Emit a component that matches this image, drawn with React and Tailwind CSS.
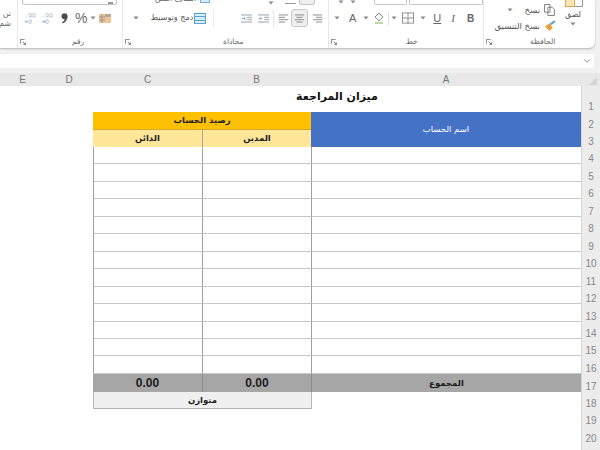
import React from 'react';
import { ChevronDown } from 'lucide-react';

const ARABIC = { fontFamily: '"DejaVu Sans", sans-serif' };

// Small launcher arrow in the corner of each ribbon group
function Launcher({ className = '' }) {
  return (
    <svg width="7" height="7" viewBox="0 0 9 9" className={className} fill="none" stroke="#777" strokeWidth="1.200">
      <path d="M.5 6V.5H6" />
      <path d="M3.5 3.5L7 7M7 4.5V7H4.5" />
    </svg>
  );
}

function Caret({ className = '' }) {
  return (
    <svg width="6" height="4" viewBox="0 0 6 4" className={className} fill="#8a8a8a">
      <path d="M.5 .5h5L3 3.500z" />
    </svg>
  );
}

function AlignIcon({ kind }) {
  const lines = {
    left: ['M1 2h12', 'M1 5h8', 'M1 8h12', 'M1 11h8'],
    center: ['M1 2h12', 'M3 5h8', 'M1 8h12', 'M3 11h8'],
    right: ['M1 2h12', 'M5 5h8', 'M1 8h12', 'M5 11h8'],
  };
  return (
    <svg width="11" height="11" viewBox="0 0 14 13" fill="none" stroke="#808080" strokeWidth="1.100">
      {lines[kind].map((d) => <path key={d} d={d} />)}
    </svg>
  );
}

function IndentIcon({ flip }) {
  return (
    <svg width="11" height="11" viewBox="0 0 14 12" fill="none" stroke="#87949a" strokeWidth="1.100">
      <path d="M0 1.500h14M0 10.500h14M8 4.500h6M8 7.500h6" />
      <path d={flip ? 'M1 6h4M3.500 4L5.500 6l-2 2' : 'M1.500 6h4M3.500 4l-2 2 2 2'} stroke="#6aaed8" />
    </svg>
  );
}

function DecimalIcon({ flip }) {
  return (
    <svg width="11" height="13" viewBox="0 0 14 14" fill="none" strokeWidth="1">
      <path d="M5 1h3v4H5zM10 1h3v4h-3zM5 9h3v4H5z" stroke="#9aa6b0" strokeDasharray="1 .5" />
      <path d={flip ? 'M0 11h4M2.500 9.500L4 11l-1.500 1.500' : 'M0 11h4M1.500 9.500L0 11l1.500 1.500'} stroke="#6aaed8" />
      <path d="M1 4h1" stroke="#6aaed8" />
    </svg>
  );
}

function RibbonGroup({ width, label, labelClass, children, top, border = true }) {
  return (
    <div className={`flex h-full flex-col ${border ? 'border-r border-[#e8e8e8]' : ''} ${width}`}>
      <div className="relative h-[8px] shrink-0 overflow-hidden">{top}</div>
      <div className="h-[28px] shrink-0">{children}</div>
      <div className="flex h-[11px] shrink-0 items-start pl-[1px]">
        <Launcher className="ml-[1px] mt-[3px]" />
        <span className={`text-[7.500px] leading-[11px] text-[#666] ${labelClass}`} style={ARABIC}>{label}</span>
      </div>
    </div>
  );
}

function Ribbon() {
  return (
    <div className="flex h-[48px] w-[595px] overflow-hidden rounded-br-md bg-white shadow-[0_1px_2px_rgba(0,0,0,0.25)]">
      {/* cropped styles group */}
      <div className="flex h-full w-[18px] shrink-0 flex-col items-end border-r border-[#e8e8e8] pr-[6px] pt-[9px] text-[8px] leading-[10px] text-[#666]" style={ARABIC}>
        <span>تن</span>
        <span>شم</span>
      </div>

      {/* number */}
      <RibbonGroup
        width="w-[105px] shrink-0"
        label="رقم"
        labelClass="ml-[45px]"
        top={
          <div className="ml-[4px] flex h-[5px] w-[95px] items-end justify-end rounded-b-[3px] border border-t-0 border-[#c4c4c4] pr-[3px]">
            <span className="h-[2px] w-[5px] bg-[#999]" />
          </div>
        }
      >
        <div className="flex h-[20px] items-center pl-[7px]">
          <DecimalIcon />
          <span className="w-[6px]" />
          <DecimalIcon flip />
          <svg width="7" height="11" viewBox="0 0 7 11" className="ml-[8px]" fill="#4d4d4d">
            <circle cx="3.500" cy="3.200" r="3" />
            <path d="M6.500 3.500c0 3-2 6-5 7l-.5-1c2-1 3-3 3-5z" />
          </svg>
          <span className="ml-[7px] text-[14px] leading-none text-[#6a6a6a]" style={{ fontFamily: '"Liberation Sans", sans-serif' }}>%</span>
          <Caret className="ml-[3px]" />
          <svg width="12" height="9" viewBox="0 0 12 9" className="ml-[3px]">
            <rect width="12" height="9" fill="#efc49a" />
            <path d="M0 3h6M0 6h6M3 0v9" stroke="#8a8a8a" strokeWidth=".8" />
            <rect x="6" width="6" height="3" fill="#888" opacity=".5" />
          </svg>
        </div>
      </RibbonGroup>

      {/* alignment */}
      <RibbonGroup
        width="w-[206px] shrink-0"
        label="محاذاة"
        labelClass="ml-[91px]"
        top={
          <div className="flex h-[8px]">
            <span className="ml-[32px] mt-[-7px] text-[8px] leading-[11px] text-[#666]" style={ARABIC}>التفاف النص</span>
            <span className="ml-[4px] mt-[-6px] h-[9px] w-[10px] border border-[#6aaed8] bg-[#d8ebf7]" />
            <Caret className="ml-[58px] mt-[1px]" />
            <span className="ml-[11px] mt-[3px] h-[1px] w-[11px] bg-[#999]" />
            <span className="ml-[3px] h-[5px] w-[16px] rounded-b-[3px] border border-t-0 border-[#c4c4c4] bg-[#efefef]" />
          </div>
        }
      >
        <div className="flex h-[20px] items-center">
          <Caret className="ml-[10px]" />
          <span className="ml-[11px] w-[44px] whitespace-nowrap text-center text-[8px] text-[#555]" style={ARABIC}>دمج وتوسيط</span>
          <svg width="12" height="11" viewBox="0 0 12 11">
            <rect x=".5" y=".5" width="11" height="10" fill="#d8ebf7" stroke="#5ba3d4" />
            <path d="M0 3.500h12M0 7.500h12" stroke="#5ba3d4" />
          </svg>
          <span className="ml-[7px] h-[18px] w-[1px] bg-[#ececec]" />
          <span className="ml-[27px]"><IndentIcon flip /></span>
          <span className="ml-[6px]"><IndentIcon /></span>
          <span className="ml-[4px] h-[17px] w-[1px] bg-[#e6e6e6]" />
          <span className="ml-[4px]"><AlignIcon kind="left" /></span>
          <span className="ml-[2px] flex h-[18px] w-[17px] items-center justify-center rounded-[3px] border border-[#c8c8c8] bg-[#efefef]"><AlignIcon kind="center" /></span>
          <span className="ml-[4px]"><AlignIcon kind="right" /></span>
        </div>
      </RibbonGroup>

      {/* font */}
      <RibbonGroup
        width="w-[155px] shrink-0"
        label="خط"
        labelClass="ml-[68px]"
        top={
          <div className="flex h-[8px]">
            <Caret className="ml-[9px]" />
            <Caret className="ml-[6px]" />
            <span className="ml-[18px] h-[5px] w-[33px] rounded-b-[2px] border border-t-0 border-[#c8c8c8]" />
            <span className="ml-[2px] h-[5px] w-[75px] rounded-b-[2px] border border-t-0 border-[#c8c8c8]" />
          </div>
        }
      >
        <div className="flex h-[20px] items-center">
          <Caret className="ml-[5px]" />
          <span className="ml-[9px] text-[11px] text-[#666]" style={{ fontFamily: '"Liberation Sans", sans-serif' }}>A</span>
          <Caret className="ml-[7px]" />
          <svg width="12" height="12" viewBox="0 0 12 12" className="ml-[4px]">
            <path d="M6 1l4 4-4 4-4-4z" fill="none" stroke="#7d9488" />
            <rect x="2" y="10" width="8" height="2" fill="#b7dca0" />
          </svg>
          <span className="ml-[3px] h-[13px] w-[1px] bg-[#dcdcdc]" />
          <Caret className="ml-[2px]" />
          <svg width="12" height="12" viewBox="0 0 13 12" className="ml-[5px]" fill="none" stroke="#8a8a8a">
            <rect x=".5" y=".5" width="12" height="11" />
            <path d="M6.500 0v12M0 6h13" />
          </svg>
          <Caret className="ml-[6px]" />
          <span className="ml-[7px] text-[11px] leading-none text-[#666] underline" style={{ fontFamily: '"Liberation Sans", sans-serif' }}>U</span>
          <span className="ml-[10px] text-[11px] italic text-[#666]" style={{ fontFamily: '"Liberation Serif", serif' }}>I</span>
          <span className="ml-[12px] text-[10px] font-bold text-[#666]" style={{ fontFamily: '"Liberation Sans", sans-serif' }}>B</span>
        </div>
      </RibbonGroup>

      {/* clipboard */}
      <RibbonGroup
        width="w-[111px] shrink-0"
        border={false}
        label="الحافظة"
        labelClass="ml-[37px]"
        top={
          <div className="ml-[81px] flex h-[8px]">
            <span className="mt-[-3px] h-[10px] w-[10px] border border-[#e0a546] bg-[#fbe3b4]" />
            <span className="mt-[-3px] h-[10px] w-[8px] border border-l-0 border-[#999]" />
          </div>
        }
      >
        <div className="flex h-[28px]">
          <div className="mt-[-3px] flex w-[72px] flex-col items-end">
            <div className="flex h-[10px] items-center">
              <Caret className="mr-[12px]" />
              <span className="text-[8.500px] leading-[10px] text-[#555]" style={ARABIC}>نسخ</span>
              <svg width="12" height="12" viewBox="0 0 11 11" className="ml-[4px]" fill="white" stroke="#808080" strokeWidth=".9">
                <path d="M.5.5h5v7h-5zM3.500 3h4l2 2v5.500h-6z" />
              </svg>
            </div>
            <div className="mt-[6px] flex h-[10px] items-center">
              <span className="whitespace-nowrap text-[8.500px] leading-[10px] text-[#555]" style={ARABIC}>نسخ التنسيق</span>
              <svg width="12" height="12" viewBox="0 0 11 11" className="ml-[4px]">
                <path d="M1 6l4-3 3 4-3 3z" fill="#e9a23b" />
                <path d="M6 4l4-3" stroke="#5ba3d4" strokeWidth="1.800" />
              </svg>
            </div>
          </div>
          <div className="ml-[8px] flex w-[18px] flex-col items-center pt-[1px]">
            <span className="whitespace-nowrap text-[8px] leading-[11px] text-[#555]" style={ARABIC}>لصق</span>
            <Caret className="mt-[2px]" />
          </div>
        </div>
      </RibbonGroup>
    </div>
  );
}

const EMPTY_ROWS = [4, 5, 6, 7, 8, 9, 10, 11, 12, 13, 14, 15, 16];

function RowNum({ n }) {
  return (
    <div className="flex items-end justify-center border-l border-[#d6d6d6] bg-[#ececec] text-[10px] leading-[11px] text-[#888]">{n}</div>
  );
}

function Sheet() {
  const ar = 'flex items-center justify-center whitespace-nowrap font-bold text-[8.500px]';
  return (
    <div
      className="grid h-[364px] grid-cols-[93px_109px_109px_270px_19px] grid-rows-[26px_18px_17px_repeat(13,17.46px)_18px_17px_17.500px_17.500px_1fr] bg-white"
      style={{ fontFamily: '"Liberation Sans", sans-serif' }}
    >
      <div />
      <div className={`col-span-3 ${ar} pb-[3px] text-[11px] text-[#111]`} style={ARABIC}>ميزان المراجعة</div>
      <RowNum n={1} />

      <div />
      <div className={`col-span-2 border-b border-[#d4ab2a] bg-[#ffc000] ${ar} text-[#222]`} style={ARABIC}>رصيد الحساب</div>
      <div className={`row-span-2 bg-[#4472c4] ${ar} font-normal text-white`} style={ARABIC}>اسم الحساب</div>
      <RowNum n={2} />

      <div />
      <div className={`bg-[#ffe699] ${ar} text-[#222]`} style={ARABIC}>الدائن</div>
      <div className={`border-l border-[#a8a8a8] bg-[#ffe699] ${ar} text-[#222]`} style={ARABIC}>المدين</div>
      <RowNum n={3} />

      {EMPTY_ROWS.map((n) => (
        <React.Fragment key={n}>
          <div />
          <div className="border-l border-b border-l-[#9f9f9f] border-b-[#c8c8c8]" />
          <div className="border-l border-b border-l-[#9f9f9f] border-b-[#c8c8c8]" />
          <div className="border-l border-b border-l-[#9f9f9f] border-b-[#c8c8c8]" />
          <RowNum n={n} />
        </React.Fragment>
      ))}

      <div />
      <div className="flex items-center justify-center bg-[#a6a6a6] text-[12px] font-bold text-[#1c1c1c]">0.00</div>
      <div className="flex items-center justify-center border-l border-[#8d8d8d] bg-[#a6a6a6] text-[12px] font-bold text-[#1c1c1c]">0.00</div>
      <div className={`border-l border-[#8d8d8d] bg-[#a6a6a6] ${ar} text-[#1c1c1c]`} style={ARABIC}>المجموع</div>
      <RowNum n={17} />

      <div />
      <div className={`col-span-2 border-l border-b border-[#b4b4b4] bg-[#f0f0f0] ${ar} text-[#222]`} style={ARABIC}>متوازن</div>
      <div className="border-l border-[#b4b4b4]" />
      <RowNum n={18} />

      <div className="col-span-4" />
      <RowNum n={19} />
      <div className="col-span-4" />
      <RowNum n={20} />
      <div className="col-span-4" />
      <div className="border-l border-[#d6d6d6] bg-[#ececec]" />
    </div>
  );
}

export default function App() {
  return (
    <div className="flex h-[450px] w-[600px] flex-col overflow-hidden bg-[#f1f1f1]">
      <Ribbon />

      {/* formula bar */}
      <div className="mt-[6px] flex h-[14px] w-[594px] items-center justify-end rounded-r-[3px] bg-white pr-[2px]">
        <ChevronDown size={10} color="#777" />
      </div>

      {/* column letters */}
      <div
        className="mt-[5px] grid h-[13px] grid-cols-[45px_48px_109px_109px_270px_19px] bg-[#e8e8e8] text-center text-[10px] leading-[13px] text-[#777]"
        style={{ fontFamily: '"Liberation Sans", sans-serif' }}
      >
        <span>E</span>
        <span>D</span>
        <span>C</span>
        <span>B</span>
        <span>A</span>
        <span className="flex items-end justify-end pb-[1px] pr-[3px]">
          <svg width="8" height="8" viewBox="0 0 9 9"><path d="M9 0v9H0z" fill="#d4d4d4" /></svg>
        </span>
      </div>

      <Sheet />
    </div>
  );
}
